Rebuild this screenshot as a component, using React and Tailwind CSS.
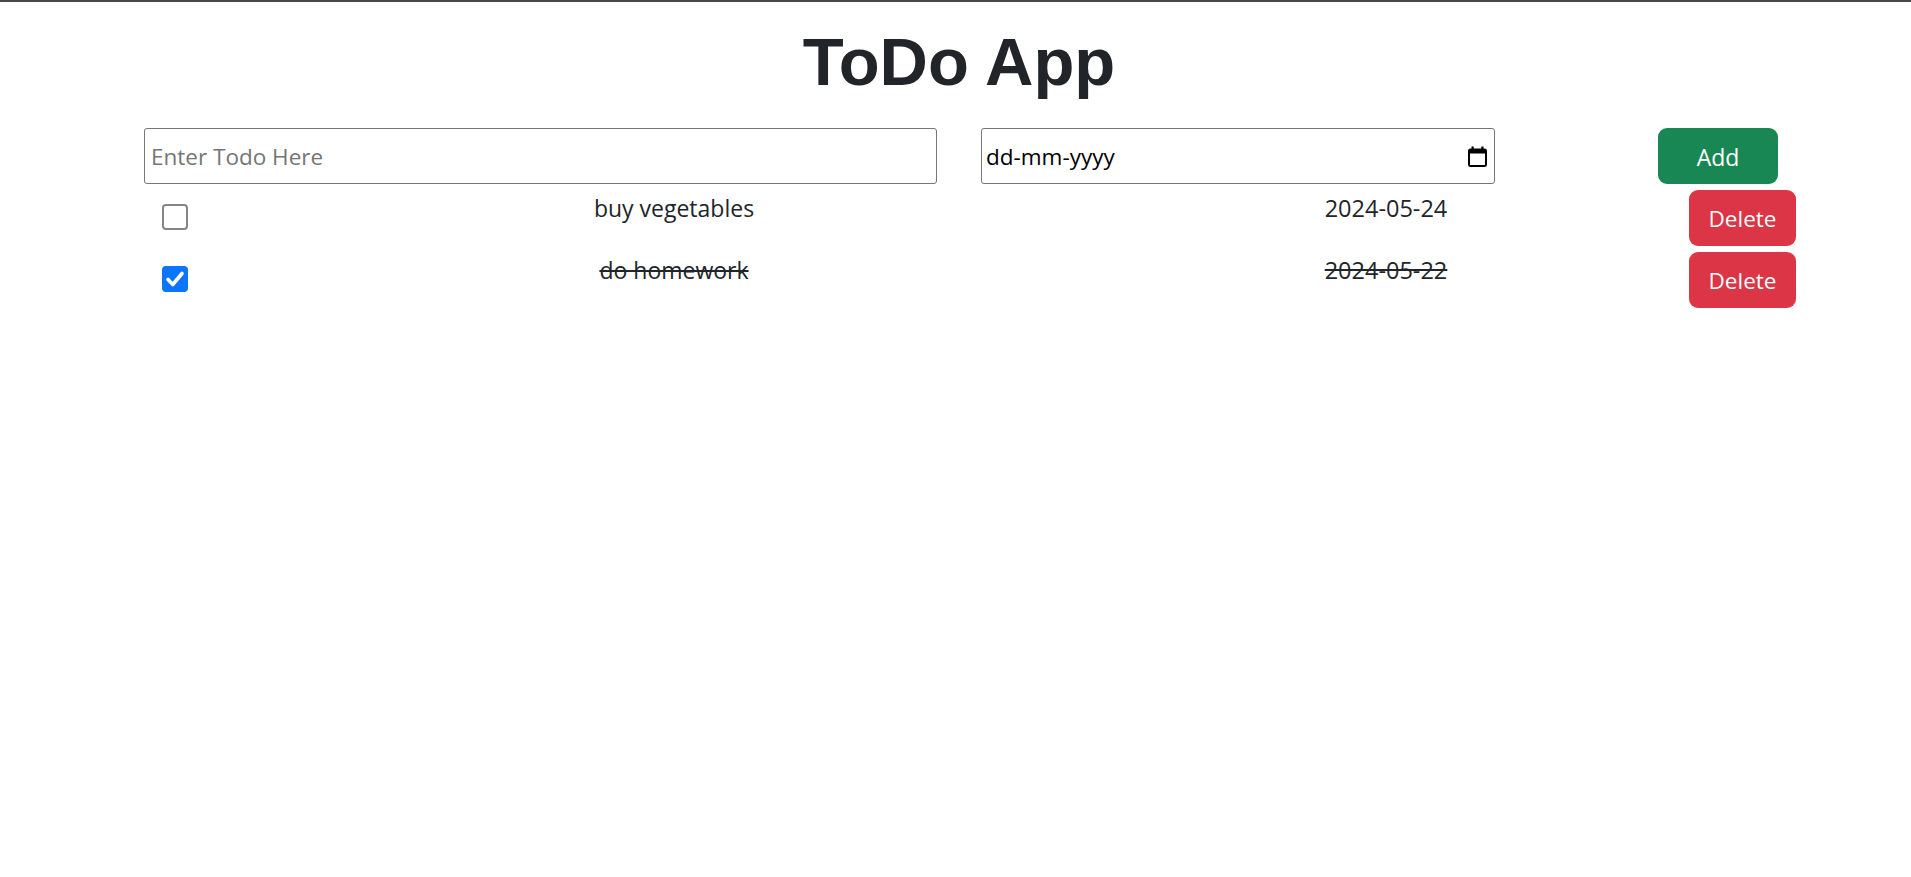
import React from "react";

function CheckBox({ checked }) {
  if (checked) {
    return (
      <div className="w-[26px] h-[26px] rounded-[4px] bg-[#0b75fe] flex items-center justify-center">
        <svg width="26" height="26" viewBox="0 0 26 26">
          <path d="M6 13.5 L10.8 18.5 L20 7.5" fill="none" stroke="white" strokeWidth="3.6" strokeLinecap="round" strokeLinejoin="round" />
        </svg>
      </div>
    );
  }
  return <div className="w-[26px] h-[26px] rounded-[4px] border-[2px] border-[#858585] bg-white" />;
}

function CalendarIcon() {
  return (
    <svg width="19" height="21" viewBox="0 0 19 21">
      <rect x="1" y="3.5" width="17" height="16.5" rx="1.5" fill="none" stroke="black" strokeWidth="2" />
      <rect x="1" y="3" width="17" height="4.5" fill="black" />
      <rect x="3.5" y="0.5" width="2.2" height="4" fill="black" />
      <rect x="13.3" y="0.5" width="2.2" height="4" fill="black" />
    </svg>
  );
}

const todos = [
  { name: "buy vegetables", date: "2024-05-24", done: false },
  { name: "do homework", date: "2024-05-22", done: true },
];

export default function App() {
  const body = { fontFamily: '"Open Sans", "Noto Sans", sans-serif' };
  return (
    <div className="min-h-screen bg-white text-[#212529]" style={body}>
      <div className="h-[2px] bg-[#45474a]" />
      <h1
        className="mt-[20px] pl-[7px] text-center text-[67px] leading-[79px] font-bold text-[#212529]"
        style={{ fontFamily: '"Liberation Sans", Arial, sans-serif' }}
      >
        ToDo App
      </h1>
      <div className="mt-[27px] flex items-start pl-[144px]">
        <div className="w-[793px] h-[56px] border border-[#767676] rounded-[3px] flex items-center pl-[6px] pt-[2px] text-[22.5px] text-[#757575]">
          Enter Todo Here
        </div>
        <div className="ml-[44px] w-[514px] h-[56px] border border-[#767676] rounded-[3px] flex items-center justify-between pl-[4px] pr-[7px] text-[22.5px] text-black">
          <span className="pt-[2px]">dd-mm-yyyy</span>
          <CalendarIcon />
        </div>
        <button className="ml-[163px] w-[120px] h-[56px] rounded-[9px] bg-[#198754] text-white text-[23px] flex items-center justify-center pt-[2px]">
          Add
        </button>
      </div>
      <div className="mt-[6px] flex flex-col gap-[6px] pl-[145px]">
        {todos.map((t) => (
          <div key={t.name} className="flex items-start h-[56px] leading-[37px]">
            <div className="w-[105px] pl-[17px] pt-[14px]">
              <CheckBox checked={t.done} />
            </div>
            <div className={"w-[848px] text-center text-[23px] " + (t.done ? "line-through" : "")}>{t.name}</div>
            <div className={"w-[576px] text-center text-[23.5px] " + (t.done ? "line-through" : "")}>{t.date}</div>
            <div className="pl-[15px]">
              <button className="w-[107px] h-[56px] rounded-[9px] bg-[#dc3545] text-white text-[22.5px] leading-normal flex items-center justify-center pt-[2px]">
                Delete
              </button>
            </div>
          </div>
        ))}
      </div>
    </div>
  );
}
